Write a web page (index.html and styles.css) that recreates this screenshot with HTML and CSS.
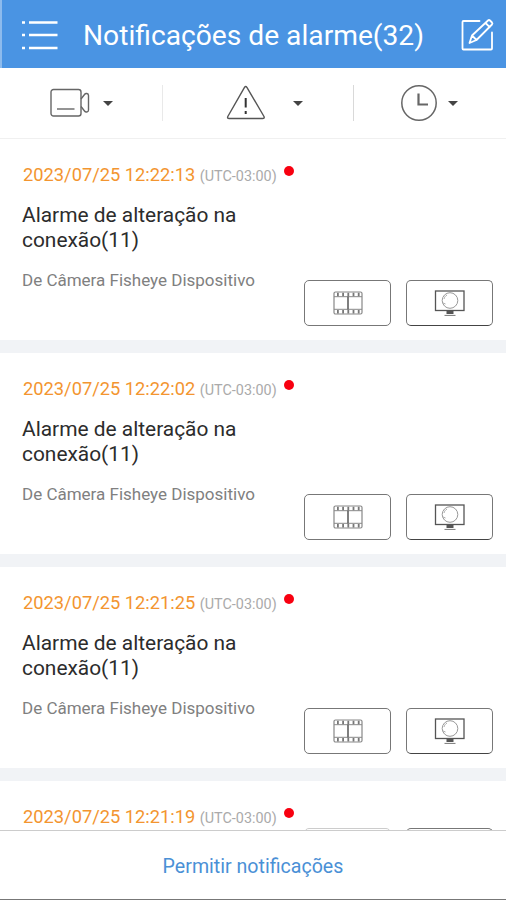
FILE: index.html
```html
<!DOCTYPE html>
<html lang="pt-BR">
<head>
  <meta charset="UTF-8">
  <meta name="viewport" content="width=device-width, initial-scale=1.0">
  <title>Notificações de alarme</title>
  <link rel="stylesheet" href="styles.css">
</head>
<body>
  <svg class="symbols" aria-hidden="true">
    <symbol id="icon-film" viewBox="0 0 32 26">
      <rect x="2" y="2" width="28" height="22" rx="1.5" fill="none" stroke="#888" stroke-width="1.2"/>
      <path d="M2 6.7h28M2 19.3h28" stroke="#888" fill="none"/>
      <path d="M16 6.5v13" stroke="#555" stroke-width="1.5" fill="none"/>
      <path d="M5 4.5h23M5 21.7h23" stroke="#777" stroke-width="3.6" stroke-dasharray="1.8 3.4" fill="none"/>
    </symbol>
    <symbol id="icon-monitor" viewBox="0 0 32 28">
      <rect x="1.5" y="2" width="28.5" height="19.5" fill="none" stroke="#555" stroke-width="1.3"/>
      <circle cx="16" cy="11.5" r="7.8" fill="none" stroke="#999"/>
      <path d="M10 10c.5-2 1.5-3 3-4M9 14l2.5 1" fill="none" stroke="#aaa"/>
      <path d="M12.5 22h7v3h-7z" fill="#555"/>
      <path d="M10.5 26.4h11" stroke="#777" fill="none"/>
    </symbol>
  </svg>

  <header>
    <svg class="menu-icon" viewBox="0 0 36 32">
      <path d="M7 3.5h28.5M7 16h28.5M7 29h28.5" stroke="#fff" stroke-width="2.6"/>
      <path d="M0 3.5h3M0 16h3M0 29h3" stroke="#fff" stroke-width="2.4"/>
    </svg>
    <h1>Notificações de alarme(32)</h1>
    <svg class="edit-icon" viewBox="0 0 34 34" fill="none" stroke="#fff" stroke-width="1.8" stroke-linejoin="round" stroke-linecap="round">
      <path d="M18.5 3H2.5a1 1 0 0 0-1 1v26.5a1 1 0 0 0 1 1H30a1 1 0 0 0 1-1V14.5"/>
      <path d="M8.5 25l2.5-7.5L27 2.5a1.5 1.5 0 0 1 2 0l2 2a1.5 1.5 0 0 1 0 2L15.5 22z M11 17.5l4.5 4.5M24.5 5l4.2 4.2"/>
    </svg>
  </header>

  <nav class="filters">
    <div class="filter filter-camera">
      <svg width="40" height="30" viewBox="0 0 40 30" fill="none" stroke="#666" stroke-width="1.4">
        <rect x="1" y="1.5" width="30" height="26.5" rx="2.5"/>
        <path d="M31 11l3.5-4.5c1-1.5 4-1.5 4 1v14.5c0 2.5-3 2.5-4 1l-3.5-4.5"/>
        <path d="M7 21h17.5"/>
      </svg>
      <span class="caret"></span>
    </div>
    <div class="filter filter-alarm">
      <svg width="40" height="36" viewBox="0 0 40 36" fill="none" stroke="#555" stroke-width="1.4" stroke-linejoin="round">
        <path d="M18.5 2.3q1.2-1.6 2.4 0L38 31.5q.8 2-1.4 2H3.2q-2.2 0-1.4-2z"/>
        <path d="M19.7 13v9.5M19.7 26v3" stroke="#333" stroke-width="2"/>
      </svg>
      <span class="caret"></span>
    </div>
    <div class="filter filter-time">
      <svg width="38" height="38" viewBox="0 0 38 38" fill="none" stroke="#666">
        <circle cx="19" cy="19" r="17.2" stroke-width="1.5"/>
        <path d="M18.5 9.5v11h9.5" stroke-width="2.2"/>
      </svg>
      <span class="caret"></span>
    </div>
  </nav>

  <main id="alarms">
    <article class="alarm">
      <p class="time">2023/07/25 12:22:13<span class="zone">(UTC-03:00)</span><i class="unread"></i></p>
      <h2>Alarme de alteração na conexão(11)</h2>
      <p class="source">De Câmera Fisheye Dispositivo</p>
      <div class="actions">
        <button class="btn-film"><svg width="32" height="26"><use href="#icon-film"/></svg></button>
        <button class="btn-live"><svg width="32" height="28"><use href="#icon-monitor"/></svg></button>
      </div>
    </article>
    <article class="alarm">
      <p class="time">2023/07/25 12:22:02<span class="zone">(UTC-03:00)</span><i class="unread"></i></p>
      <h2>Alarme de alteração na conexão(11)</h2>
      <p class="source">De Câmera Fisheye Dispositivo</p>
      <div class="actions">
        <button class="btn-film"><svg width="32" height="26"><use href="#icon-film"/></svg></button>
        <button class="btn-live"><svg width="32" height="28"><use href="#icon-monitor"/></svg></button>
      </div>
    </article>
    <article class="alarm">
      <p class="time">2023/07/25 12:21:25<span class="zone">(UTC-03:00)</span><i class="unread"></i></p>
      <h2>Alarme de alteração na conexão(11)</h2>
      <p class="source">De Câmera Fisheye Dispositivo</p>
      <div class="actions">
        <button class="btn-film"><svg width="32" height="26"><use href="#icon-film"/></svg></button>
        <button class="btn-live"><svg width="32" height="28"><use href="#icon-monitor"/></svg></button>
      </div>
    </article>
    <article class="alarm alarm-last">
      <p class="time">2023/07/25 12:21:19<span class="zone">(UTC-03:00)</span><i class="unread"></i></p>
      <div class="actions">
        <button class="btn-film"></button>
        <button class="btn-live"></button>
      </div>
    </article>
  </main>

  <footer>
    <a class="allow">Permitir notificações</a>
  </footer>
</body>
</html>
```
FILE: styles.css
```css
* {
  box-sizing: border-box;
  margin: 0;
  padding: 0;
}

body {
  width: 506px;
  height: 900px;
  display: flex;
  flex-direction: column;
  overflow: hidden;
  font-family: Roboto, sans-serif;
  background-color: #fff;
}

svg {
  display: block;
  flex: none;
}

.symbols {
  display: none;
}

header {
  flex: none;
  height: 68px;
  display: flex;
  align-items: center;
  padding: 2px 11px 0 20px;
  background-color: #4a94e3;
  border-left: 2px solid #8dbbed;
}

.menu-icon {
  width: 36px;
  height: 32px;
}

header h1 {
  flex: 1;
  margin-left: 25px;
  padding-top: 2px;
  font-size: 28.2px;
  font-weight: 400;
  line-height: 40px;
  white-space: nowrap;
  color: #fff;
}

.edit-icon {
  width: 34px;
  height: 34px;
}

.filters {
  flex: none;
  height: 71px;
  display: flex;
  border-bottom: 1px solid #f0f0f0;
}

.filter {
  display: flex;
  align-items: center;
  height: 36px;
  margin-top: 17px;
}

.filter-camera {
  width: 163px;
  padding-left: 50px;
  border-right: 1px solid #e9e9e9;
}

.filter-alarm {
  width: 191px;
  padding-left: 63px;
  border-right: 1px solid #d9d9d9;
}

.filter-time {
  padding-left: 46px;
}

.caret {
  border: 5.5px solid transparent;
  border-top-color: #444;
  border-bottom: 0;
  margin-left: 13px;
}

.filter-alarm .caret {
  margin-left: 27px;
}

.filter-time .caret {
  margin-left: 10px;
}

#alarms {
  flex: 1;
  min-height: 0;
  overflow: hidden;
}

.alarm {
  height: 214px;
  padding: 23px 13px 0 23px;
  border-bottom: 13px solid #f1f3f6;
}

.time {
  display: flex;
  align-items: baseline;
  height: 25px;
  line-height: 25px;
  font-size: 18.3px;
  white-space: pre;
  color: #f39530;
}

.zone {
  font-size: 14.4px;
  margin-left: 4.5px;
  color: #aaa;
}

.unread {
  width: 10px;
  height: 10px;
  margin-left: 7px;
  align-self: flex-start;
  margin-top: 3.5px;
  border-radius: 50%;
  background-color: #f80010;
}

.alarm h2 {
  width: 240px;
  margin: 16px 0 0 -1px;
  font-size: 20.9px;
  font-weight: 400;
  line-height: 25px;
  color: #2c2c2c;
}

.source {
  margin: 17px 0 0 -1px;
  font-size: 17px;
  line-height: 20px;
  color: #808080;
}

.actions {
  display: flex;
  justify-content: flex-end;
  gap: 15px;
  margin-top: -10px;
}

.actions button {
  width: 87px;
  height: 46px;
  display: flex;
  justify-content: center;
  align-items: center;
  background-color: #fff;
  border: 1.5px solid #777;
  border-radius: 5px;
}

.actions .btn-live {
  border-bottom-color: #444;
}

.alarm-last .actions {
  margin-top: -1px;
}

.alarm-last .btn-film {
  border-color: #ccc;
}

footer {
  flex: none;
  height: 70px;
  display: flex;
  justify-content: center;
  align-items: center;
  padding-top: 2px;
  border-top: 1px solid #ccc;
  border-bottom: 1px solid #777;
}

.allow {
  font-size: 19.6px;
  color: #4a90d6;
}
```
